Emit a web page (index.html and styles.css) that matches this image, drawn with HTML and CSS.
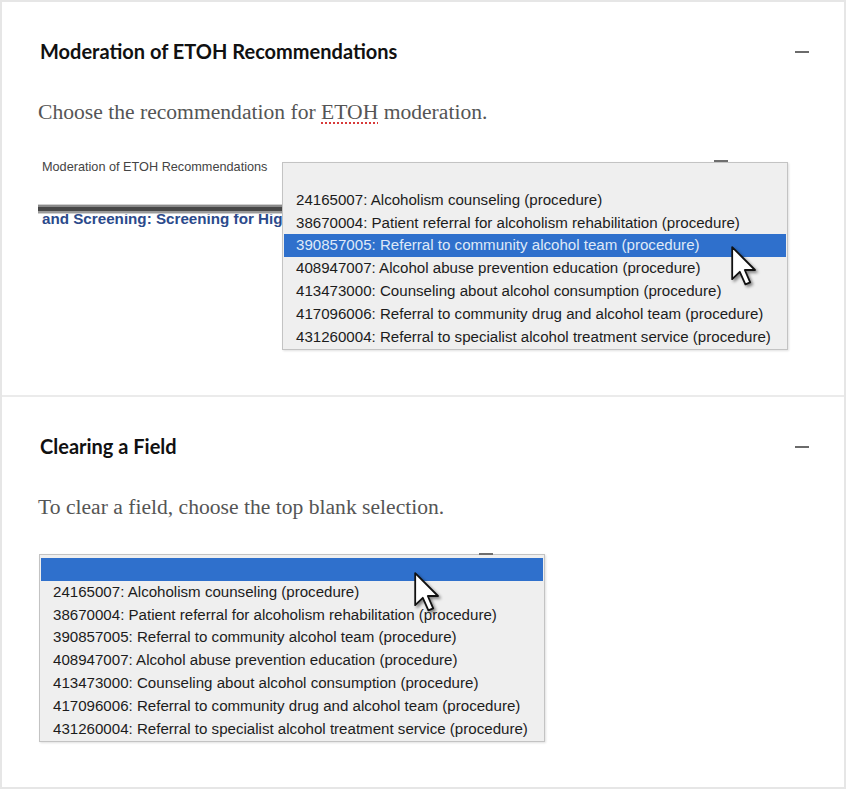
FILE: index.html
```html
<!DOCTYPE html>
<html lang="en">
<head>
<meta charset="utf-8">
<title>ETOH Recommendations</title>
<link rel="stylesheet" href="styles.css">
</head>
<body>
<div class="card">
  <section class="sec">
    <div class="sec-head">
      <h2 class="title">Moderation of ETOH Recommendations</h2>
      <span class="minus"></span>
    </div>
    <p class="lead">Choose the recommendation for <span class="spell">ETOH</span> moderation.</p>
    <div class="shot shot-one">
      <div class="form-left">
        <div class="form-label">Moderation of ETOH Recommendations</div>
        <div class="rule"></div>
        <div class="clip"><span class="blue">and Screening: Screening for Hig</span></div>
      </div>
      <div class="dropwrap">
        <span class="mark"></span>
        <ul class="drop">
          <li class="opt"></li>
          <li class="opt">24165007: Alcoholism counseling (procedure)</li>
          <li class="opt">38670004: Patient referral for alcoholism rehabilitation (procedure)</li>
          <li class="opt sel">390857005: Referral to community alcohol team (procedure)</li>
          <li class="opt">408947007: Alcohol abuse prevention education (procedure)</li>
          <li class="opt">413473000: Counseling about alcohol consumption (procedure)</li>
          <li class="opt">417096006: Referral to community drug and alcohol team (procedure)</li>
          <li class="opt">431260004: Referral to specialist alcohol treatment service (procedure)</li>
        </ul>
        <svg class="cursor cursor-one" viewBox="0 0 13 20" width="26" height="40"><path d="M0.6 0.6 L0.6 16.6 L4.4 12.9 L7.2 19.2 L9.6 18.2 L6.9 12 L12 12 Z" fill="#fff" stroke="#111" stroke-width="0.9" stroke-linejoin="round"/></svg>
      </div>
    </div>
  </section>
  <section class="sec">
    <div class="sec-head">
      <h2 class="title">Clearing a Field</h2>
      <span class="minus"></span>
    </div>
    <p class="lead">To clear a field, choose the top blank selection.</p>
    <div class="shot shot-two">
      <div class="dropwrap">
        <span class="mark"></span>
        <ul class="drop">
          <li class="opt sel"></li>
          <li class="opt">24165007: Alcoholism counseling (procedure)</li>
          <li class="opt">38670004: Patient referral for alcoholism rehabilitation (procedure)</li>
          <li class="opt">390857005: Referral to community alcohol team (procedure)</li>
          <li class="opt">408947007: Alcohol abuse prevention education (procedure)</li>
          <li class="opt">413473000: Counseling about alcohol consumption (procedure)</li>
          <li class="opt">417096006: Referral to community drug and alcohol team (procedure)</li>
          <li class="opt">431260004: Referral to specialist alcohol treatment service (procedure)</li>
        </ul>
        <svg class="cursor cursor-two" viewBox="0 0 13 20" width="26" height="40"><path d="M0.6 0.6 L0.6 16.6 L4.4 12.9 L7.2 19.2 L9.6 18.2 L6.9 12 L12 12 Z" fill="#fff" stroke="#111" stroke-width="0.9" stroke-linejoin="round"/></svg>
      </div>
    </div>
  </section>
</div>
</body>
</html>
```
FILE: styles.css
```css
* { box-sizing: border-box; }
html, body { margin: 0; padding: 0; background: #fff; }
body { font-family: "Liberation Sans", Arial, sans-serif; }

.card {
  width: 846px;
  border: 2px solid #e6e6e6;
}

.sec {
  padding: 37px 35px 45px 36px;
}
.sec + .sec { border-top: 2px solid #ebebeb; }

.sec-head {
  display: flex;
  align-items: center;
  justify-content: space-between;
  height: 24px;
}
.title {
  margin: 0;
  padding-left: 2px;
  font-family: Lato, "Open Sans", sans-serif;
  font-weight: 700;
  font-size: 20px;
  line-height: 24px;
  color: #111;
}
.minus {
  display: block;
  width: 14px;
  height: 2px;
  background: #6b6b6b;
  margin-top: 2px;
}

.lead {
  margin: 34px 0 0;
  font-family: "Liberation Serif", "Times New Roman", serif;
  font-size: 21.6px;
  line-height: 30px;
  color: #555;
}
.spell {
  text-decoration: underline dotted #d83a3a;
  text-decoration-thickness: 1.5px;
  text-underline-offset: 3px;
}

.shot { margin-top: 26px; display: flex; }
.shot-two { padding-top: 6px; padding-left: 1px; }

.form-left {
  width: 244px;
  padding-top: 7px;
  padding-left: 4px;
}
.form-label {
  font-size: 12.7px;
  line-height: 14px;
  color: #444;
  white-space: nowrap;
}
.rule {
  margin-top: 30px;
  margin-left: -4px;
  height: 10px;
  background: linear-gradient(#d0d0d0 0 1px, #8a8a8a 1px 3px, #474747 3px 7px, #9a9a9a 7px 9px, #cfcfcf 9px);
}
.clip {
  height: 15px;
  overflow: hidden;
  white-space: nowrap;
}
.blue {
  display: block;
  margin-top: -4px;
  font-weight: 700;
  font-size: 15.2px;
  line-height: 17px;
  color: #2b4a8b;
}

.dropwrap {
  position: relative;
  width: 506px;
}
.shot-one .dropwrap { margin-top: 9px; }

.mark {
  position: absolute;
  top: -2px;
  left: 432px;
  width: 14px;
  height: 2px;
  background: #6e6e6e;
}
.shot-two .mark { left: 440px; top: -1px; }

.drop {
  list-style: none;
  margin: 0;
  padding: 3px 1px 1px;
  height: 188px;
  border: 1px solid #c3c3c3;
  background: #efefef;
  box-shadow: 1px 1px 2px rgba(0,0,0,0.12);
}
.opt {
  height: 22.8px;
  line-height: 22.8px;
  padding-left: 12px;
  font-size: 15.1px;
  color: #1c1c1c;
  white-space: nowrap;
}
.opt.sel {
  background: #2f70cc;
  color: #dfe9f8;
}

.cursor {
  position: absolute;
  filter: drop-shadow(2px 2px 1.5px rgba(0,0,0,0.45));
}
.cursor-one { left: 449px; top: 84px; }
.cursor-two { left: 375px; top: 18px; }
```
